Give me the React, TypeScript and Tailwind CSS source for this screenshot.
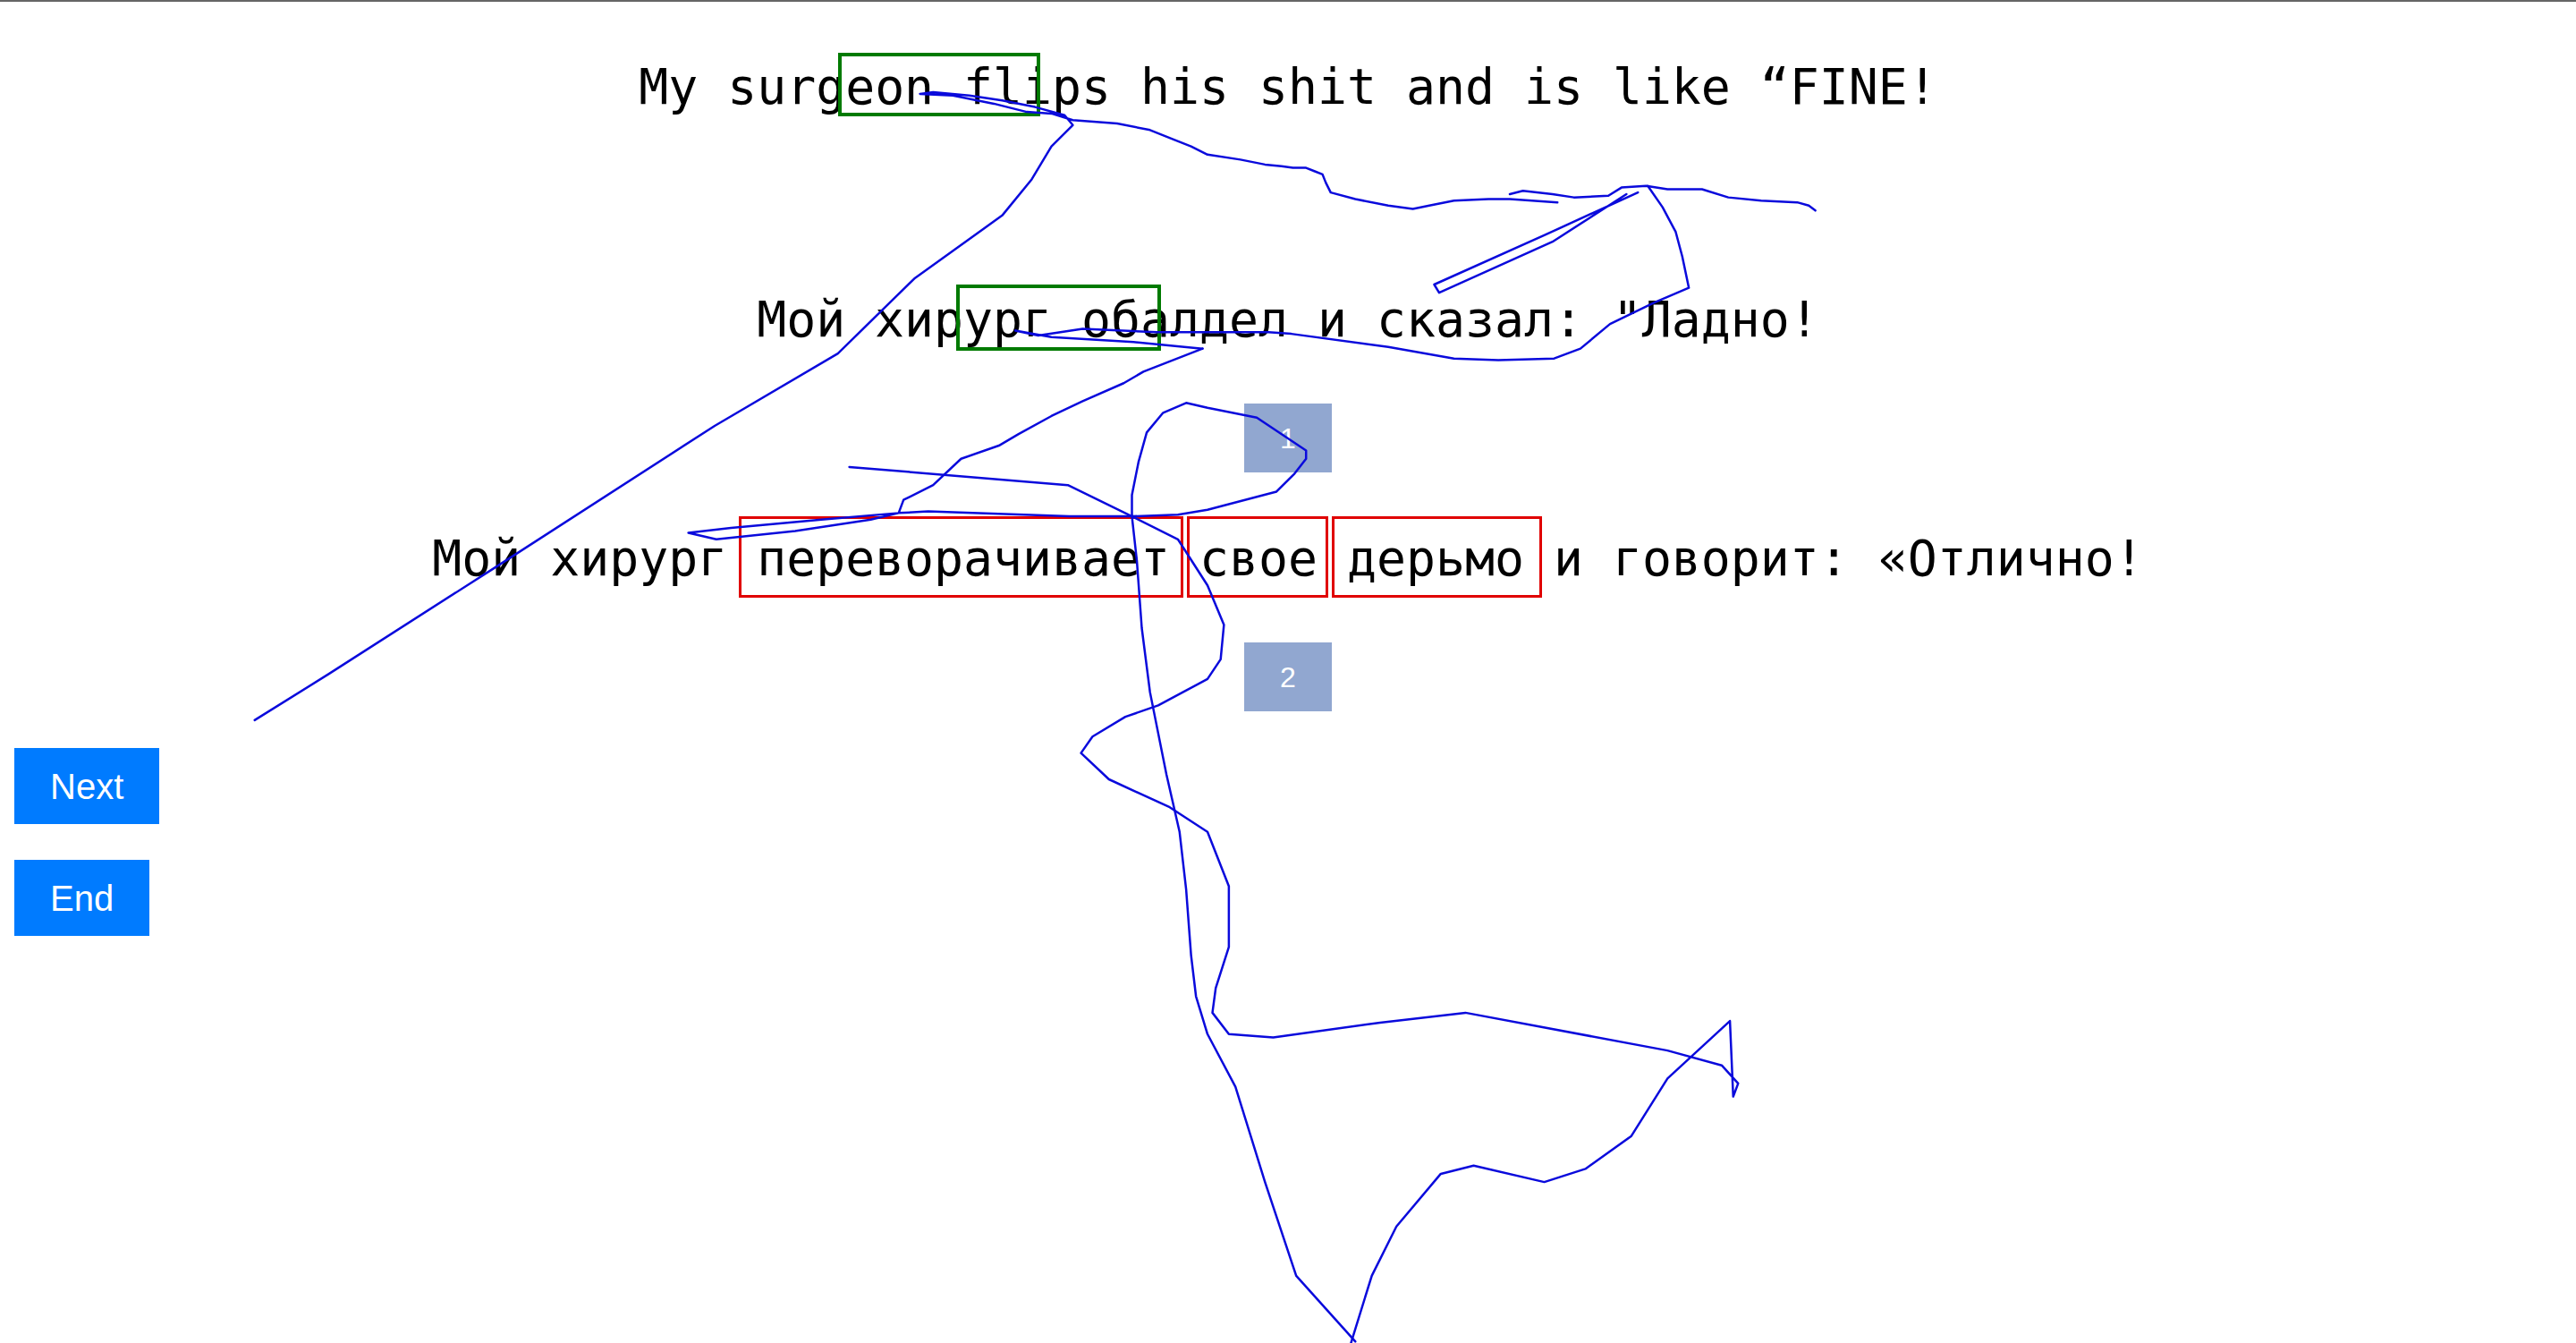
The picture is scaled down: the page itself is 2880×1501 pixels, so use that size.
const strokes: string[] = [
  // long diagonal up to the top line and along it
  '155,437 200,409 300,345 435,258 510,214 557,168 610,130 628,108 640,88 653,75 648,69 630,64 610,60 590,57 568,55 560,56 580,57 605,62 625,67 640,68 653,72 680,74 700,78 715,84 725,88 735,93 755,96 770,99 780,100 787,101 795,101 800,103 805,105 807,110 810,116 825,120 845,124 860,126 870,124 885,121 906,120 919,120 948,122',
  '919,117 927,115 945,117 958,119 979,118 987,113 1002,112 1015,114 1036,114 1052,119 1072,121 1094,122 1101,124 1105,127',
  // right loop and back to line two
  '1003,112 1012,125 1020,140 1024,155 1028,174 1007,183 980,196 962,211 946,217 912,218 885,217 845,210 786,202 772,201 704,201 659,199 632,203 618,200 640,204 690,207 732,211',
  '997,116 940,142 873,172 876,177 945,146 990,117',
  // down through line three and the long drop
  '732,211 696,225 684,232 659,243 640,252 620,263 608,270 585,278 568,294 550,303 547,311 530,315 484,322 436,327 419,323 445,320 500,315 547,311 565,310 592,311 651,313 689,313 717,312 735,309 777,298 788,287 795,278 795,273 765,253 735,247 722,244 708,250 698,262 693,280 689,300 689,313 692,340 695,381 700,420 710,470 718,505 722,540 725,580 728,605 735,628 752,660 770,718 789,775 825,815',
  '517,283 650,294 689,313 717,327 735,355 745,379 743,400 735,412 720,420 705,428 685,435 665,447 658,457 675,473 712,490 735,505 748,538 748,575 740,600 738,615 748,628 775,630 840,621 892,615 1015,638 1048,647 1058,658 1055,666 1053,620 1015,655 993,690 965,710 940,718 897,708 877,713 850,745 835,775 822,817',
];

function Scribble() {
  return (
    <svg
      className="pointer-events-none absolute left-0 top-0"
      width={2880}
      height={1501}
      viewBox="0 0 1568 817"
      preserveAspectRatio="none"
    >
      {strokes.map((pts, i) => (
        <polyline
          key={i}
          points={pts}
          fill="none"
          stroke="#0a0adc"
          strokeWidth={2.5}
          strokeLinejoin="round"
          strokeLinecap="round"
          vectorEffect="non-scaling-stroke"
        />
      ))}
    </svg>
  );
}

function Mark({ className }: { className: string }) {
  return <span className={'pointer-events-none absolute ' + className} />;
}

function NumberTile({ n }: { n: number }) {
  return (
    <div className="flex h-[77px] w-[98px] items-center justify-center bg-[#91a7d0] font-['Liberation_Sans',Arial,sans-serif] text-[32px] text-white">
      {n}
    </div>
  );
}

export default function App() {
  const mono = "font-['DejaVu_Sans_Mono',monospace] text-[54.8px] leading-[64px] text-black whitespace-pre";
  const btn =
    "flex h-[85px] items-center bg-[#007bff] px-10 font-['Liberation_Sans',Arial,sans-serif] text-[40px] text-white";

  return (
    <div className="relative min-h-screen overflow-hidden border-t-2 border-[#666] bg-white">
      <div className="flex flex-col items-center pt-[63px]">
        <div className={'relative ' + mono}>
          My surgeon flips his shit and is like “FINE!
          <Mark className="left-[223px] top-[-6px] h-[71px] w-[226px] border-4 border-[#007a00]" />
        </div>

        <div className={'relative mt-[196px] ' + mono}>
          Мой хирург обалдел и сказал: "Ладно!
          <Mark className="left-[223px] top-[-7px] h-[74px] w-[229px] border-4 border-[#007a00]" />
        </div>

        <div className="mt-[62px]">
          <NumberTile n={1} />
        </div>

        <div className={'relative mt-[64px] ' + mono}>
          Мой хирург переворачивает свое дерьмо и говорит: «Отлично!
          <Mark className="left-[343px] top-[-15px] h-[91px] w-[497px] border-[3px] border-[#e00000]" />
          <Mark className="left-[844px] top-[-15px] h-[91px] w-[158px] border-[3px] border-[#e00000]" />
          <Mark className="left-[1006px] top-[-15px] h-[91px] w-[235px] border-[3px] border-[#e00000]" />
        </div>

        <div className="mt-[62px]">
          <NumberTile n={2} />
        </div>
      </div>

      <div className="mt-[41px] flex flex-col items-start gap-10 pl-4">
        <button className={btn}>Next</button>
        <button className={btn}>End</button>
      </div>

      <Scribble />
    </div>
  );
}
